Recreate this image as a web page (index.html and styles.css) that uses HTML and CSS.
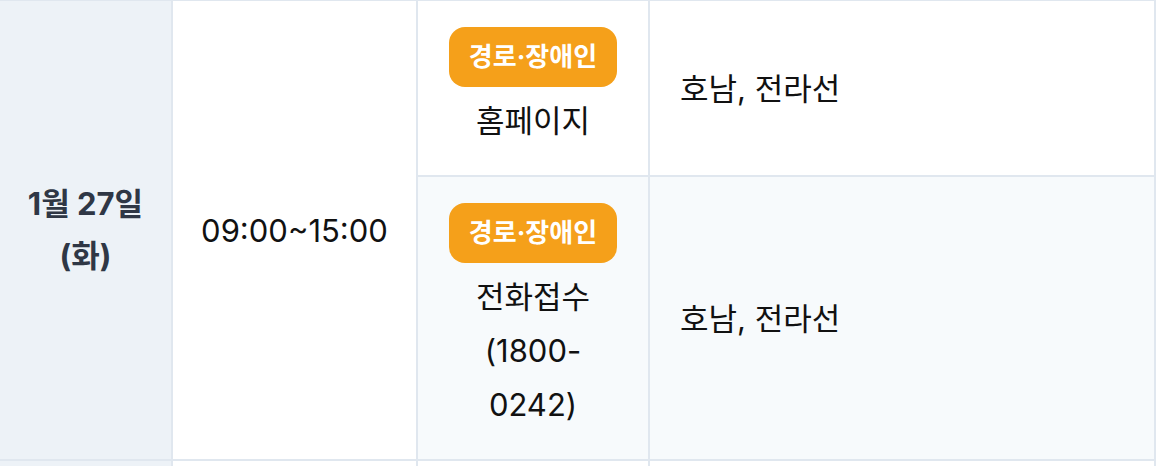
FILE: index.html
```html
<!DOCTYPE html>
<html lang="ko">
<head>
<meta charset="utf-8">
<title>예매 일정</title>
<link rel="stylesheet" href="styles.css">
</head>
<body>
<table class="schedule">
  <colgroup>
    <col class="c-date">
    <col class="c-time">
    <col class="c-method">
    <col class="c-route">
  </colgroup>
  <tbody>
    <tr>
      <td class="date" rowspan="2">1월 27일 (화)</td>
      <td class="time" rowspan="2">09:00~15:00</td>
      <td class="method">
        <span class="badge">경로·장애인</span>
        <div class="label">홈페이지</div>
      </td>
      <td class="route">호남, 전라선</td>
    </tr>
    <tr class="alt">
      <td class="method">
        <span class="badge">경로·장애인</span>
        <div class="label">전화접수 (1800-0242)</div>
      </td>
      <td class="route">호남, 전라선</td>
    </tr>
    <tr class="next">
      <td class="date"></td>
      <td></td>
      <td></td>
      <td></td>
    </tr>
  </tbody>
</table>
</body>
</html>
```

FILE: styles.css
```css
html, body {
  margin: 0;
  padding: 0;
  background: #ffffff;
}

.schedule {
  width: 1156px;
  table-layout: fixed;
  border-collapse: separate;
  border-spacing: 0;
  border-top: 1px solid #e0e7ef;
  font-family: Inter, "Noto Sans CJK KR", sans-serif;
  font-size: 31px;
  color: #111111;
}

.c-date { width: 173px; }
.c-time { width: 245px; }
.c-method { width: 232px; }
.c-route { width: 506px; }

.schedule td {
  box-sizing: border-box;
  padding: 0;
  border-right: 2px solid #e0e7ef;
  border-bottom: 2px solid #e0e7ef;
  vertical-align: middle;
}

.schedule .date {
  background: #edf2f7;
  color: #2f3745;
  font-weight: 700;
  text-align: center;
  line-height: 52px;
  padding: 0 20px;
}

.schedule .time {
  text-align: center;
  padding: 0 20px;
}

.schedule .method {
  text-align: center;
  padding: 26px 30px 27px;
}

.schedule .route {
  padding: 0 30px 4px;
}

.alt td {
  background: #f7fafc;
}

.badge {
  display: block;
  width: fit-content;
  margin: 0 auto 7px;
  box-sizing: border-box;
  height: 60px;
  padding: 0 20px;
  border-radius: 16px;
  background: #f5a01a;
  color: #ffffff;
  font-size: 26px;
  font-weight: 700;
  line-height: 60px;
}

.label {
  line-height: 54px;
}

.next td {
  height: 40px;
}
```
